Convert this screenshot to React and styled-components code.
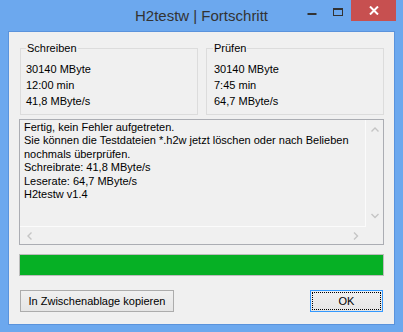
import React from "react";
import styled, { createGlobalStyle } from "styled-components";

const GlobalStyle = createGlobalStyle`
  html, body { margin: 0; padding: 0; }
  body { width: 403px; height: 332px; overflow: hidden; background: #6ca8ee; }
`;

const Window = styled.div`
  width: 403px;
  height: 332px;
  box-sizing: border-box;
  display: flex;
  flex-direction: column;
  background: #6ca8ee;
  font-family: "Liberation Sans", Arial, sans-serif;
  font-size: 11px;
  color: #000;
`;

const TitleBar = styled.div`
  height: 31px;
  flex: none;
  display: grid;
  grid-template-columns: 104px 1fr 104px;
`;

const Title = styled.div`
  grid-column: 2;
  text-align: center;
  font-size: 15px;
  line-height: 15px;
  padding-top: 8px;
  color: #333;
  white-space: nowrap;
`;

const Controls = styled.div`
  grid-column: 3;
  justify-self: end;
  display: flex;
  align-items: flex-start;
  padding-right: 7px;
`;

const CtlButton = styled.div`
  width: ${(p) => p.$w}px;
  height: 21px;
  display: flex;
  align-items: center;
  justify-content: center;
  background: ${(p) => (p.$close ? "#c75050" : "transparent")};
`;

const Client = styled.div`
  flex: 1;
  margin: 0 8px 7px 8px;
  border: 1px solid #5a93dc;
  background: #f0f0f0;
  padding: 10px 10px 12px 10px;
  display: flex;
  flex-direction: column;
`;

const Groups = styled.div`
  display: grid;
  grid-template-columns: 1fr 1fr;
  column-gap: 8px;
  margin-left: 1px;
`;

const Group = styled.fieldset`
  margin: 0;
  min-width: 0;
  border: 1px solid #dcdcdc;
  padding: 6px 4px 5px ${(p) => p.$pl}px;
`;

const Legend = styled.legend`
  padding: 0 1px;
  margin-left: ${(p) => p.$ml}px;
  line-height: 13px;
`;

const Line = styled.div`
  line-height: 16px;
  white-space: nowrap;
`;

const LogBox = styled.div`
  margin-top: 4px;
  height: 126px;
  box-sizing: border-box;
  border: 1px solid #abadb3;
  display: grid;
  grid-template-columns: 1fr 17px;
  grid-template-rows: 1fr 17px;
`;

const LogText = styled.div`
  padding: 1px 4px;
  line-height: 13.4px;
  white-space: nowrap;
  overflow: hidden;
  border-right: 1px solid #fbfbfb;
  border-bottom: 1px solid #fbfbfb;
`;

const VScroll = styled.div`
  display: flex;
  flex-direction: column;
  justify-content: space-between;
  align-items: center;
  padding: 7px 0 8px 0;
`;

const HScroll = styled.div`
  display: flex;
  justify-content: space-between;
  align-items: center;
  padding: 0 7px 0 7px;
`;

const Corner = styled.div``;

const Chevron = ({ dir }) => {
  const d = {
    up: "M0.5 4.5 L4 1 L7.5 4.5",
    down: "M0.5 1 L4 4.5 L7.5 1",
    left: "M4.5 0.5 L1 4 L4.5 7.5",
    right: "M1 0.5 L4.5 4 L1 7.5",
  }[dir];
  const vert = dir === "up" || dir === "down";
  return (
    <svg width={vert ? 8 : 6} height={vert ? 6 : 8} viewBox={vert ? "0 0 8 6" : "0 0 6 8"}>
      <path d={d} fill="none" stroke="#c5c5c5" strokeWidth="1.4" />
    </svg>
  );
};

const Progress = styled.div`
  margin-top: 9px;
  height: 22px;
  box-sizing: border-box;
  border: 1px solid #bcbcbc;
  background: #e6e6e6;
  display: flex;
`;

const ProgressFill = styled.div`
  background: #06b025;
  height: 100%;
`;

const ButtonRow = styled.div`
  margin-top: 14px;
  display: flex;
  justify-content: space-between;
  padding: 0 1px;
`;

const Button = styled.button`
  height: 22px;
  width: ${(p) => p.$w}px;
  box-sizing: border-box;
  margin: 0;
  padding: 0;
  font-family: "Liberation Sans", Arial, sans-serif;
  font-size: 11px;
  color: #000;
  border: 1px solid ${(p) => (p.$default ? "#3399ff" : "#acacac")};
  background: linear-gradient(#f0f0f0, #e5e5e5);
  outline: ${(p) => (p.$default ? "1px dotted #000" : "none")};
  outline-offset: -3px;
`;

export default function App() {
  const progress = 100;
  return (
    <>
      <GlobalStyle />
      <Window>
        <TitleBar>
          <Title>H2testw | Fortschritt</Title>
          <Controls>
            <CtlButton $w={26}>
              <svg width="10" height="21" viewBox="0 0 10 21">
                <rect x="0.5" y="13" width="9" height="2" fill="#333" />
              </svg>
            </CtlButton>
            <CtlButton $w={26}>
              <svg width="10" height="21" viewBox="0 0 10 21">
                <rect x="0.5" y="8.5" width="9" height="7" fill="none" stroke="#333" strokeWidth="1" />
                <rect x="0" y="8" width="10" height="2" fill="#333" />
              </svg>
            </CtlButton>
            <CtlButton $w={45} $close>
              <svg width="10" height="9" viewBox="0 0 10 9">
                <path d="M1 0.5 L9 8.5 M9 0.5 L1 8.5" stroke="#fff" strokeWidth="2" />
              </svg>
            </CtlButton>
          </Controls>
        </TitleBar>
        <Client>
          <Groups>
            <Group $pl={5}>
              <Legend $ml={0}>Schreiben</Legend>
              <Line>30140 MByte</Line>
              <Line>12:00 min</Line>
              <Line>41,8 MByte/s</Line>
            </Group>
            <Group $pl={7}>
              <Legend $ml={-1}>Prüfen</Legend>
              <Line>30140 MByte</Line>
              <Line>7:45 min</Line>
              <Line>64,7 MByte/s</Line>
            </Group>
          </Groups>
          <LogBox>
            <LogText>
              Fertig, kein Fehler aufgetreten.
              <br />
              Sie können die Testdateien *.h2w jetzt löschen oder nach Belieben
              <br />
              nochmals überprüfen.
              <br />
              Schreibrate: 41,8 MByte/s
              <br />
              Leserate: 64,7 MByte/s
              <br />
              H2testw v1.4
            </LogText>
            <VScroll>
              <Chevron dir="up" />
              <Chevron dir="down" />
            </VScroll>
            <HScroll>
              <Chevron dir="left" />
              <Chevron dir="right" />
            </HScroll>
            <Corner />
          </LogBox>
          <Progress>
            <ProgressFill style={{ width: `${progress}%` }} />
          </Progress>
          <ButtonRow>
            <Button $w={154}>In Zwischenablage kopieren</Button>
            <Button $w={73} $default>OK</Button>
          </ButtonRow>
        </Client>
      </Window>
    </>
  );
}
